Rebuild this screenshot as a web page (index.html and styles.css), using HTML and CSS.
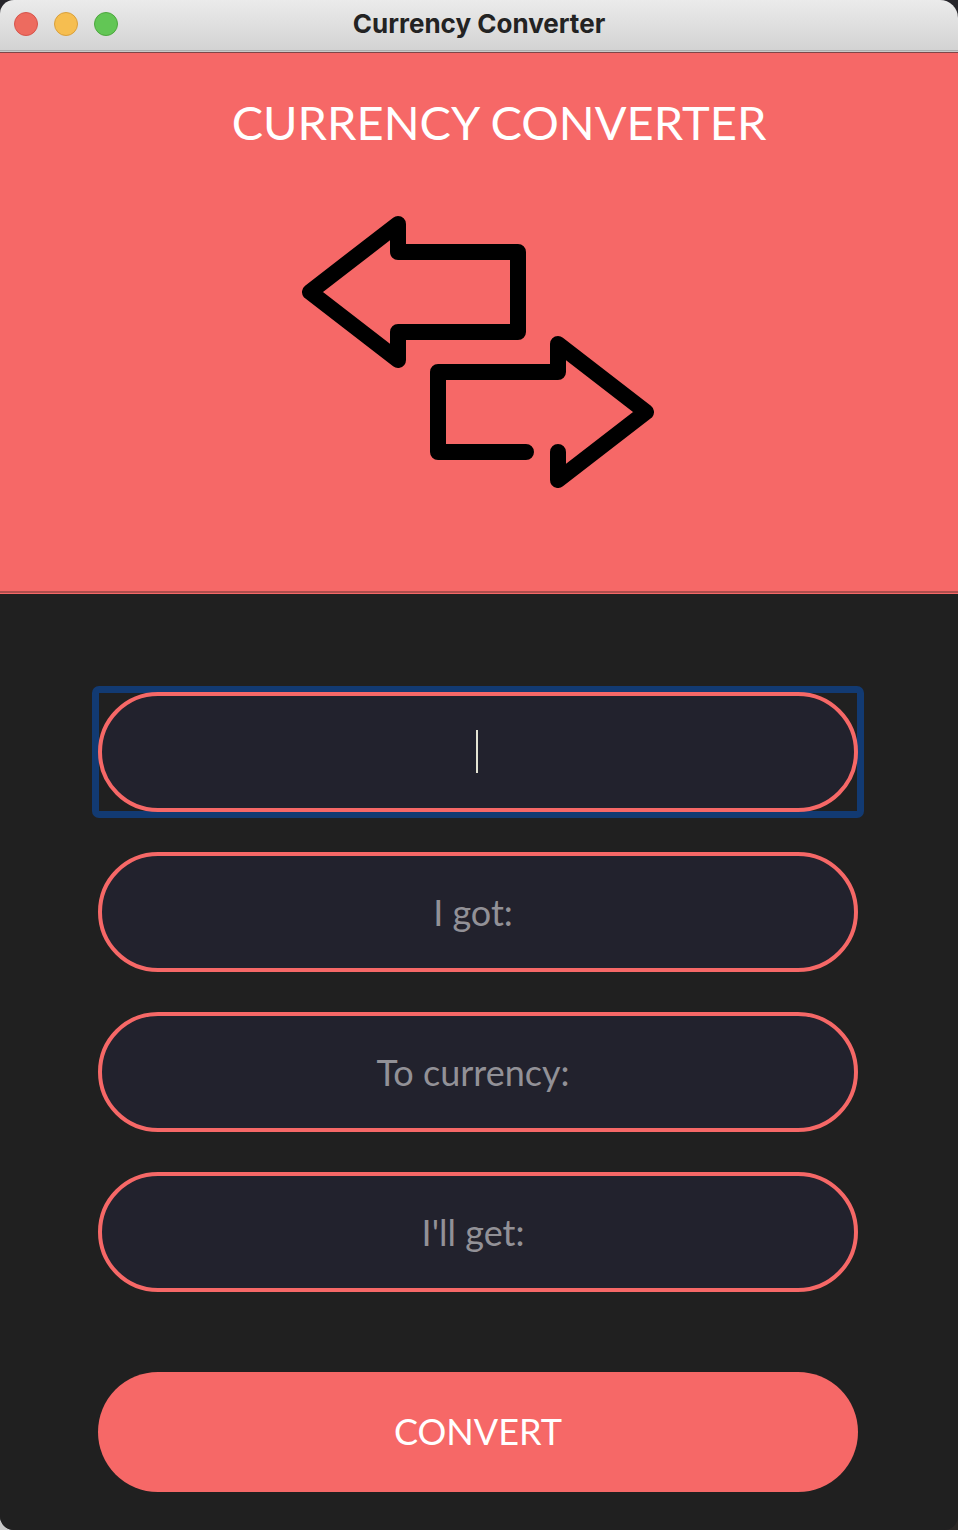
FILE: index.html
```html
<!DOCTYPE html>
<html lang="en">
<head>
<meta charset="utf-8">
<meta name="viewport" content="width=device-width, initial-scale=1">
<title>Currency Converter</title>
<link rel="stylesheet" href="styles.css">
</head>
<body>
<div class="window">
  <div class="titlebar">
    <div class="lights">
      <button class="light light-close" type="button" aria-label="Close"></button>
      <button class="light light-minimize" type="button" aria-label="Minimize"></button>
      <button class="light light-zoom" type="button" aria-label="Zoom"></button>
    </div>
    <div class="titlebar-text">Currency Converter</div>
  </div>
  <header class="hero">
    <h1 class="hero-title">CURRENCY CONVERTER</h1>
    <svg class="hero-icon" viewBox="302 216 352 272" aria-hidden="true">
      <path d="M398 224L310 292L398 360V332H518V252H398Z"/>
      <path d="M526 452H438V372H558V344L646 412L558 480V452"/>
    </svg>
  </header>
  <form class="form">
    <div class="field field-focused">
      <input class="input" type="text" aria-label="From currency">
      <span class="caret"></span>
    </div>
    <div class="field">
      <input class="input" type="text" placeholder="I got:" aria-label="I got">
    </div>
    <div class="field">
      <input class="input" type="text" placeholder="To currency:" aria-label="To currency">
    </div>
    <div class="field">
      <input class="input" type="text" placeholder="I'll get:" aria-label="I'll get">
    </div>
    <button class="convert" type="button">CONVERT</button>
  </form>
</div>
</body>
</html>
```

FILE: styles.css
```css
* {
  box-sizing: border-box;
}

html {
  background: linear-gradient(90deg, #c8c8c8 50%, #2a2725 50%);
}

body {
  margin: 0;
  font-family: Lato, "Open Sans", sans-serif;
}

.window {
  display: flex;
  flex-direction: column;
  min-height: 100vh;
  overflow: hidden;
  border-radius: 0 0 14px 14px;
  background: #26252a;
}

.titlebar {
  display: grid;
  grid-template-columns: 1fr auto 1fr;
  align-items: center;
  height: 53px;
  padding: 0 14px 5px;
  border-bottom: 1px solid #804547;
  border-radius: 14px 18px 0 0;
  background: linear-gradient(#ebebeb, #d3d3d3 50px, #acacac 50px, #acacac 51px, #c8c8c8 51px);
}

.lights {
  display: flex;
  gap: 16px;
}

.light {
  width: 24px;
  height: 24px;
  padding: 0;
  border: 1px solid;
  border-radius: 50%;
}

.light-close {
  border-color: #d6544b;
  background: #ed6b5f;
}

.light-minimize {
  border-color: #d9a03c;
  background: #f6be50;
}

.light-zoom {
  border-color: #4da73e;
  background: #62c655;
}

.titlebar-text {
  color: #232323;
  font: bold 26px/32px Inter, "Liberation Sans", sans-serif;
}

.hero {
  display: flex;
  flex-direction: column;
  align-items: center;
  gap: 64px;
  padding: 39px 2px 105px 0;
  border-bottom: 1px solid #f66867;
  background: #f66867;
  box-shadow: inset 0 -2px #b04e4d;
}

.hero-title {
  margin: 0;
  padding-left: 42px;
  color: #fff;
  font-size: 47px;
  font-weight: 400;
  line-height: 60px;
}

.hero-icon {
  width: 352px;
  height: 272px;
  fill: none;
  stroke: #000;
  stroke-width: 16;
  stroke-linecap: round;
  stroke-linejoin: round;
}

.form {
  display: flex;
  flex: 1;
  flex-direction: column;
  gap: 40px;
  padding: 98px 100px 38px 98px;
  background: #202020;
}

.field {
  position: relative;
}

.field-focused::before {
  position: absolute;
  inset: -6px;
  border: 7px solid #123a72;
  border-radius: 7px;
  content: "";
}

.input {
  position: relative;
  display: block;
  width: 100%;
  height: 120px;
  padding: 0 26px 0 16px;
  border: 4px solid #f66867;
  border-radius: 60px;
  outline: none;
  background: #22222d;
  color: #e4e4d8;
  font: 36px/44px Lato, "Open Sans", sans-serif;
  text-align: center;
}

.input::placeholder {
  color: #929197;
  opacity: 1;
}

.caret {
  position: absolute;
  top: 38px;
  left: calc(50% - 2px);
  width: 2px;
  height: 43px;
  background: #e3e3d3;
}

.convert {
  height: 120px;
  margin-top: 40px;
  padding-bottom: 4px;
  border: 0;
  border-radius: 60px;
  background: #f66867;
  color: #fff;
  font: 36px/44px Lato, "Open Sans", sans-serif;
}
```
